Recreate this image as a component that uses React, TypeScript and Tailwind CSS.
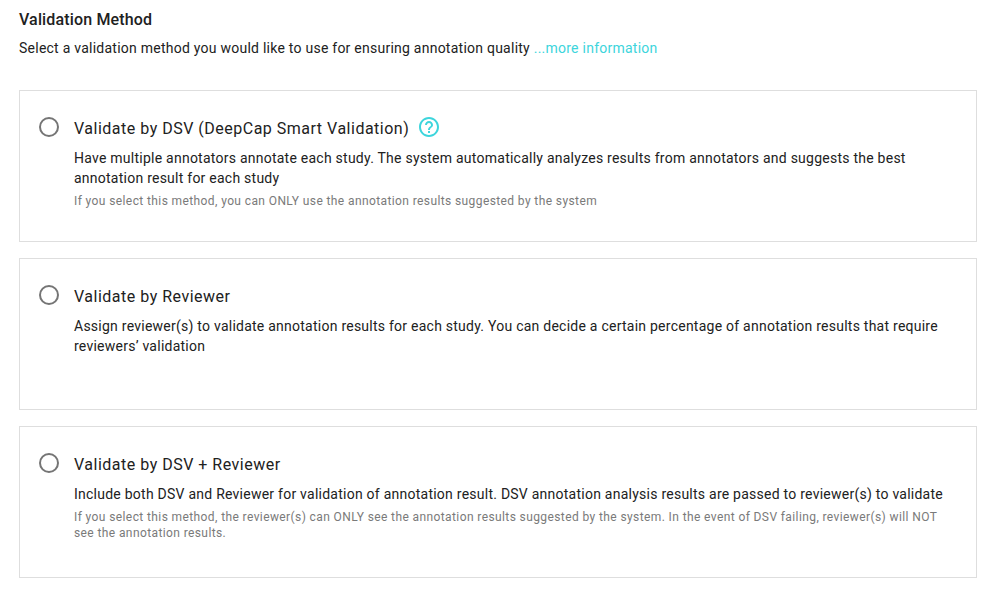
import React from "react";

type Option = { title: string; body: string; note?: string; help?: boolean };

const options: Option[] = [
  {
    title: "Validate by DSV (DeepCap Smart Validation)",
    body: "Have multiple annotators annotate each study. The system automatically analyzes results from annotators and suggests the best annotation result for each study",
    note: "If you select this method, you can ONLY use the annotation results suggested by the system",
    help: true,
  },
  {
    title: "Validate by Reviewer",
    body: "Assign reviewer(s) to validate annotation results for each study. You can decide a certain percentage of annotation results that require reviewers’ validation",
  },
  {
    title: "Validate by DSV + Reviewer",
    body: "Include both DSV and Reviewer for validation of annotation result. DSV annotation analysis results are passed to reviewer(s) to validate",
    note: "If you select this method, the reviewer(s) can ONLY see the annotation results suggested by the system. In the event of DSV failing, reviewer(s) will NOT see the annotation results.",
  },
];

function HelpIcon() {
  return (
    <svg viewBox="0 0 24 24" className="ml-2 size-6 shrink-0 fill-[#3dd5dc]">
      <path d="M11 18h2v-2h-2v2zm1-16C6.48 2 2 6.48 2 12s4.48 10 10 10 10-4.48 10-10S17.52 2 12 2zm0 18c-4.41 0-8-3.59-8-8s3.59-8 8-8 8 3.59 8 8-3.59 8-8 8zm0-14c-2.21 0-4 1.79-4 4h2c0-1.1.9-2 2-2s2 .9 2 2c0 2-3 1.75-3 5h2c0-2.25 3-2.5 3-5 0-2.21-1.79-4-4-4z" />
    </svg>
  );
}

function Card({ title, body, note, help }: Option) {
  return (
    <label className="flex h-[152px] border border-[#dedede] pl-[19px] pr-[26px] pt-[26px]">
      <span className="size-5 shrink-0 rounded-full border-2 border-[#757575]" />
      <div className="ml-[15px] flex-1">
        <div className="-mt-0.5 flex h-6 items-center text-base tracking-[0.5px]">
          <span className="pt-[3px]">{title}</span>
          {help && <HelpIcon />}
        </div>
        <p className="mt-[9px] text-sm leading-5 tracking-[0.245px]">{body}</p>
        {note && <p className="mt-[5px] text-xs leading-4 tracking-[0.396px] text-[#7a7a7a]">{note}</p>}
      </div>
    </label>
  );
}

export default function App() {
  return (
    <main className="h-[589px] bg-white pl-[19px] pr-[13px] pt-2 font-['Roboto',sans-serif] text-[#212121]">
      <h1 className="text-base font-medium leading-6 tracking-[0.15px]">Validation Method</h1>
      <p className="mt-[6px] text-sm leading-5 tracking-[0.245px]">
        Select a validation method you would like to use for ensuring annotation quality{" "}
        <a className="text-[#3dd5dc]">...more information</a>
      </p>
      <section className="mt-8 flex flex-col gap-4">
        {options.map((o) => (
          <Card key={o.title} {...o} />
        ))}
      </section>
    </main>
  );
}
